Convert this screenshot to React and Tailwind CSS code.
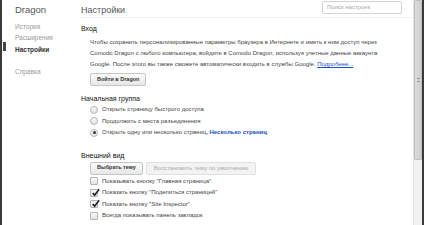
import { useState } from "react";

const font = { fontFamily: '"Liberation Sans", Arial, sans-serif' };

function Radio({ checked }) {
  return (
    <span className="w-[8px] h-[8px] rounded-full border border-[#b5b5b5] bg-gradient-to-b from-[#fafafa] to-[#e2e2e2] flex items-center justify-center shrink-0">
      {checked && <span className="w-[3px] h-[3px] rounded-full bg-[#333]" />}
    </span>
  );
}

function Check({ checked }) {
  return (
    <span className="w-[8px] h-[8px] rounded-[1px] border border-[#b5b5b5] bg-gradient-to-b from-[#fafafa] to-[#e2e2e2] flex items-center justify-center shrink-0 relative">
      {checked && (
        <svg viewBox="0 0 10 10" className="absolute w-[9px] h-[9px] -top-[2px] left-0">
          <path d="M2 5.5 L4 8 L9 1.5" fill="none" stroke="#222" strokeWidth="1.8" />
        </svg>
      )}
    </span>
  );
}

function Btn({ children, disabled }) {
  return (
    <button
      className={
        "h-[13px] border rounded-[2px] leading-none " +
        (disabled
          ? "px-[7px] text-[6px] border-[#e0e0e0] bg-[#f3f3f3] text-[#aaa]"
          : "px-[6px] text-[5.5px] border-[#c6c6c6] bg-gradient-to-b from-[#fbfbfb] to-[#e6e6e6] text-[#333] font-bold")
      }
    >
      {children}
    </button>
  );
}

export default function App() {
  const [startup] = useState(2);
  const [checks] = useState([false, true, true, false]);

  const startupItems = [
    "Открыть страницу быстрого доступа",
    "Продолжить с места разъединения",
    "Открыть одну или несколько страниц",
  ];
  const checkItems = [
    'Показывать кнопку "Главная страница"',
    'Показать кнопку "Поделиться страницей"',
    'Показать кнопку "Site Inspector"',
    "Всегда показывать панель закладок",
  ];

  return (
    <div className="w-[424px] h-[225px] flex overflow-hidden bg-white text-[#333]" style={font}>
      <div className="w-[2px] shrink-0 bg-[#3a3a3a]" />

      {/* sidebar */}
      <div className="w-[79px] shrink-0 relative flex flex-col pt-[4px]">
        <div className="ml-[13px] text-[9.5px] leading-[12px] text-[#555]">Dragon</div>
        <div className="absolute left-[1px] top-[42px] w-[3px] h-[9px] bg-[#444]" />
        <ul className="ml-[13px] pt-[5px] text-[6.5px] leading-[11px] text-[#999]">
          <li>История</li>
          <li>Расширения</li>
          <li className="text-[#333] font-bold mt-[1px]">Настройки</li>
          <li className="mt-[11px]">Справка</li>
        </ul>
      </div>

      {/* main */}
      <div className="flex-1 min-w-0 flex flex-col">
        <div className="flex items-start justify-between h-[18px] border-b border-[#efefef]">
          <div className="pt-[4px] text-[9px] leading-[12px] text-[#555]">Настройки</div>
          <div className="mt-[1px] mr-[11px] w-[80px] h-[13px] border border-[#d4d4d4] rounded-[2px] text-[6px] leading-[11px] pl-[4px] text-[#aaa]">
            Поиск настроек
          </div>
        </div>

        <div className="pt-[6px]">
          <div className="text-[7px] leading-[10px] text-[#111]">Вход</div>
          <div className="pl-[9px] pt-[3px] text-[6px] leading-[11px] text-[#444]">
            <p>Чтобы сохранить персонализированные параметры браузера в Интернете и иметь к ним доступ через</p>
            <p>Comodo Dragon с любого компьютера, войдите в Comodo Dragon, используя учетные данные аккаунта</p>
            <p>
              Google. После этого вы также сможете автоматически входить в службы Google.{" "}
              <span className="text-[#1a4fc4] underline">Подробнее...</span>
            </p>
            <div className="pt-[3px]">
              <Btn>Войти в Dragon</Btn>
            </div>
          </div>
        </div>

        <div className="pt-[8px]">
          <div className="text-[7px] leading-[10px] text-[#111]">Начальная группа</div>
          <div className="pl-[9px] text-[6px] leading-[11.5px] text-[#444]">
            {startupItems.map((t, i) => (
              <div key={t} className="flex items-center gap-[4px] h-[11.5px]">
                <Radio checked={i === startup} />
                <span>
                  {t}
                  {i === 2 && <span className="text-[#1a4fc4] font-bold">, Несколько страниц</span>}
                </span>
              </div>
            ))}
          </div>
        </div>

        <div className="pt-[12px]">
          <div className="text-[7px] leading-[10px] text-[#111]">Внешний вид</div>
          <div className="pl-[9px] pt-[1px] text-[6px] text-[#444]">
            <div className="flex gap-[3px]">
              <Btn>Выбрать тему</Btn>
              <Btn disabled>Восстановить тему по умолчанию</Btn>
            </div>
            <div className="pt-[1px]">
              {checkItems.map((t, i) => (
                <div key={t} className="flex items-center gap-[4px] h-[11.5px] leading-[11.5px]">
                  <Check checked={checks[i]} />
                  <span>{t}</span>
                </div>
              ))}
            </div>
          </div>
        </div>
      </div>

      {/* scrollbar */}
      <div className="w-[9px] shrink-0 flex flex-col border-l border-[#e4e4e4]">
        <div className="h-[160px] bg-gradient-to-r from-[#dcdcdc] to-[#cfcfcf] border border-[#bdbdbd] rounded-[1px] flex items-center justify-center">
          <div className="w-[3px] h-[4px] border-y border-[#999]" />
        </div>
        <div className="flex-1 bg-[#f1f1f1]" />
      </div>
      <div className="w-[2px] shrink-0 bg-[#3a3a3a]" />
    </div>
  );
}
